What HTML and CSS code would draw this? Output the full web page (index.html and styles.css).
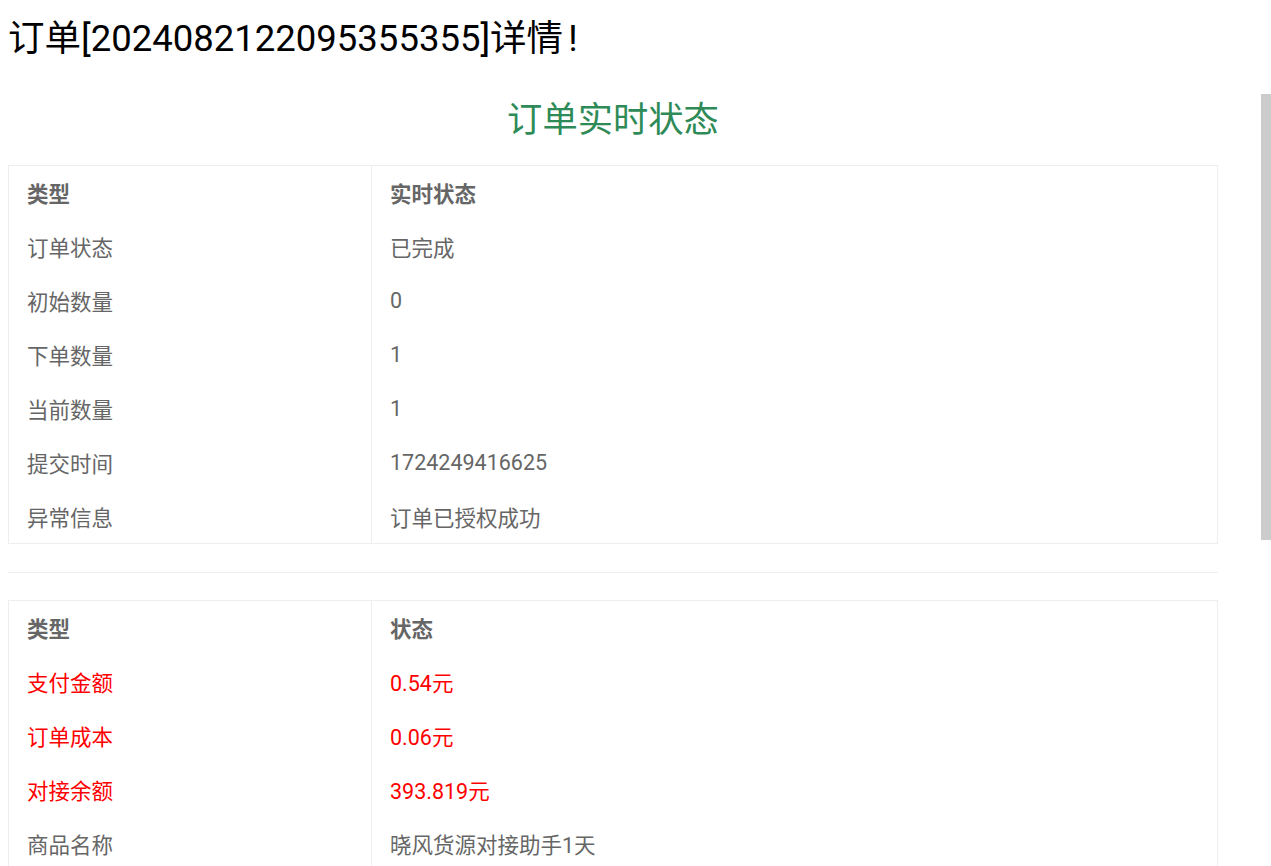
FILE: index.html
```html
<!DOCTYPE html>
<html lang="zh-CN">
<head>
<meta charset="utf-8">
<title>订单详情</title>
<link rel="stylesheet" href="styles.css">
</head>
<body>
<div class="page">
  <h1 class="title">订单[2024082122095355355]详情<span class="bang">!</span></h1>
  <h2 class="section-title">订单实时状态</h2>
  <table class="info-table">
    <colgroup><col class="col-type"><col></colgroup>
    <thead>
      <tr><th>类型</th><th>实时状态</th></tr>
    </thead>
    <tbody>
      <tr><td>订单状态</td><td>已完成</td></tr>
      <tr><td>初始数量</td><td>0</td></tr>
      <tr><td>下单数量</td><td>1</td></tr>
      <tr><td>当前数量</td><td>1</td></tr>
      <tr><td>提交时间</td><td>1724249416625</td></tr>
      <tr><td>异常信息</td><td>订单已授权成功</td></tr>
    </tbody>
  </table>
  <hr class="divider">
  <table class="info-table">
    <colgroup><col class="col-type"><col></colgroup>
    <thead>
      <tr><th>类型</th><th>状态</th></tr>
    </thead>
    <tbody>
      <tr class="red"><td>支付金额</td><td>0.54元</td></tr>
      <tr class="red"><td>订单成本</td><td>0.06元</td></tr>
      <tr class="red"><td>对接余额</td><td>393.819元</td></tr>
      <tr><td>商品名称</td><td>晓风货源对接助手1天</td></tr>
    </tbody>
  </table>
</div>
<div class="side-bar"></div>
</body>
</html>
```
FILE: styles.css
```css
html, body {
  margin: 0;
  padding: 0;
  background: #fff;
}
body {
  padding: 0 8px;
  font-family: Roboto, "Noto Sans CJK SC", sans-serif;
  color: #666;
  overflow: hidden;
}
.page {
  width: 1210px;
}
.title {
  margin: 12px 0 0;
  font-size: 36.5px;
  font-weight: 400;
  line-height: 54px;
  color: #000;
}
.bang {
  margin-left: 5px;
}
.section-title {
  margin: 28px 0 19px;
  font-size: 35.3px;
  font-weight: 400;
  line-height: 52px;
  text-align: center;
  color: #2e8b57;
}
.info-table {
  width: 100%;
  border-collapse: collapse;
  border: 1px solid #eee;
  font-size: 21.5px;
}
.col-type {
  width: 363px;
}
.info-table th,
.info-table td {
  height: 54px;
  padding: 1px 18px 1px;
  text-align: left;
  vertical-align: middle;
  color: #666;
  box-sizing: border-box;
}
.info-table th {
  font-weight: 700;
}
.info-table th + th,
.info-table td + td {
  border-left: 1px solid #eee;
}
.info-table tr.red td {
  color: #f00;
}
.divider {
  margin: 28px 0 27px;
  border: 0;
  border-top: 1px solid #eee;
  height: 0;
}
.side-bar {
  position: absolute;
  top: 94px;
  right: 0;
  width: 10px;
  height: 446px;
  background: #ccc;
}
```
